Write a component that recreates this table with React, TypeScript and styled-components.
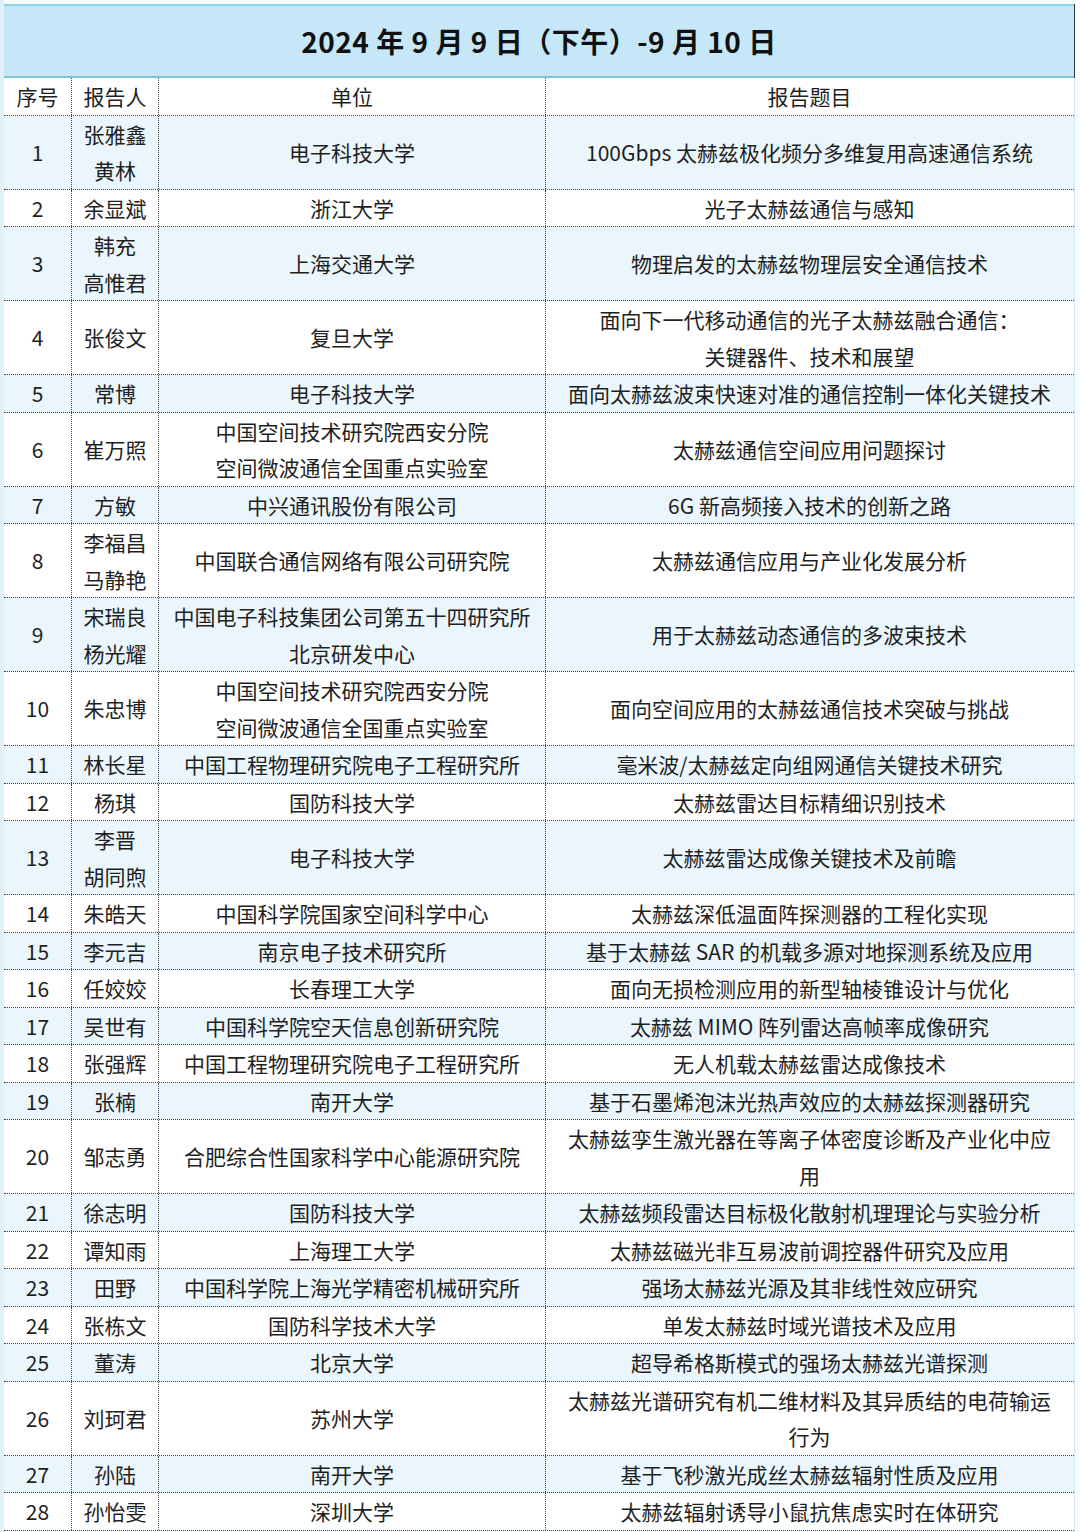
import React from 'react';
import styled, { createGlobalStyle } from 'styled-components';

interface Entry {
  no: number;
  people: string[];
  unit: string[];
  topic: string[];
}

const ROWS: Entry[] = [
  { no: 1, people: ['张雅鑫', '黄林'], unit: ['电子科技大学'], topic: ['100Gbps 太赫兹极化频分多维复用高速通信系统'] },
  { no: 2, people: ['余显斌'], unit: ['浙江大学'], topic: ['光子太赫兹通信与感知'] },
  { no: 3, people: ['韩充', '高惟君'], unit: ['上海交通大学'], topic: ['物理启发的太赫兹物理层安全通信技术'] },
  { no: 4, people: ['张俊文'], unit: ['复旦大学'], topic: ['面向下一代移动通信的光子太赫兹融合通信：', '关键器件、技术和展望'] },
  { no: 5, people: ['常博'], unit: ['电子科技大学'], topic: ['面向太赫兹波束快速对准的通信控制一体化关键技术'] },
  { no: 6, people: ['崔万照'], unit: ['中国空间技术研究院西安分院', '空间微波通信全国重点实验室'], topic: ['太赫兹通信空间应用问题探讨'] },
  { no: 7, people: ['方敏'], unit: ['中兴通讯股份有限公司'], topic: ['6G 新高频接入技术的创新之路'] },
  { no: 8, people: ['李福昌', '马静艳'], unit: ['中国联合通信网络有限公司研究院'], topic: ['太赫兹通信应用与产业化发展分析'] },
  { no: 9, people: ['宋瑞良', '杨光耀'], unit: ['中国电子科技集团公司第五十四研究所', '北京研发中心'], topic: ['用于太赫兹动态通信的多波束技术'] },
  { no: 10, people: ['朱忠博'], unit: ['中国空间技术研究院西安分院', '空间微波通信全国重点实验室'], topic: ['面向空间应用的太赫兹通信技术突破与挑战'] },
  { no: 11, people: ['林长星'], unit: ['中国工程物理研究院电子工程研究所'], topic: ['毫米波/太赫兹定向组网通信关键技术研究'] },
  { no: 12, people: ['杨琪'], unit: ['国防科技大学'], topic: ['太赫兹雷达目标精细识别技术'] },
  { no: 13, people: ['李晋', '胡同煦'], unit: ['电子科技大学'], topic: ['太赫兹雷达成像关键技术及前瞻'] },
  { no: 14, people: ['朱皓天'], unit: ['中国科学院国家空间科学中心'], topic: ['太赫兹深低温面阵探测器的工程化实现'] },
  { no: 15, people: ['李元吉'], unit: ['南京电子技术研究所'], topic: ['基于太赫兹 SAR 的机载多源对地探测系统及应用'] },
  { no: 16, people: ['任姣姣'], unit: ['长春理工大学'], topic: ['面向无损检测应用的新型轴棱锥设计与优化'] },
  { no: 17, people: ['吴世有'], unit: ['中国科学院空天信息创新研究院'], topic: ['太赫兹 MIMO 阵列雷达高帧率成像研究'] },
  { no: 18, people: ['张强辉'], unit: ['中国工程物理研究院电子工程研究所'], topic: ['无人机载太赫兹雷达成像技术'] },
  { no: 19, people: ['张楠'], unit: ['南开大学'], topic: ['基于石墨烯泡沫光热声效应的太赫兹探测器研究'] },
  { no: 20, people: ['邹志勇'], unit: ['合肥综合性国家科学中心能源研究院'], topic: ['太赫兹孪生激光器在等离子体密度诊断及产业化中应', '用'] },
  { no: 21, people: ['徐志明'], unit: ['国防科技大学'], topic: ['太赫兹频段雷达目标极化散射机理理论与实验分析'] },
  { no: 22, people: ['谭知雨'], unit: ['上海理工大学'], topic: ['太赫兹磁光非互易波前调控器件研究及应用'] },
  { no: 23, people: ['田野'], unit: ['中国科学院上海光学精密机械研究所'], topic: ['强场太赫兹光源及其非线性效应研究'] },
  { no: 24, people: ['张栋文'], unit: ['国防科学技术大学'], topic: ['单发太赫兹时域光谱技术及应用'] },
  { no: 25, people: ['董涛'], unit: ['北京大学'], topic: ['超导希格斯模式的强场太赫兹光谱探测'] },
  { no: 26, people: ['刘珂君'], unit: ['苏州大学'], topic: ['太赫兹光谱研究有机二维材料及其异质结的电荷输运', '行为'] },
  { no: 27, people: ['孙陆'], unit: ['南开大学'], topic: ['基于飞秒激光成丝太赫兹辐射性质及应用'] },
  { no: 28, people: ['孙怡雯'], unit: ['深圳大学'], topic: ['太赫兹辐射诱导小鼠抗焦虑实时在体研究'] },
];

const Lines = ({ items }: { items: string[] }) => (
  <>
    {items.map((t, i) => (
      <Line key={i}>{t}</Line>
    ))}
  </>
);

const App = () => (
  <>
    <GlobalStyle />
    <Page>
      <Sheet>
        <Title>2024 年 9 月 9 日（下午）-9 月 10 日</Title>
        <Row>
          <Cell>序号</Cell>
          <Cell>报告人</Cell>
          <Cell>单位</Cell>
          <Cell $last>报告题目</Cell>
        </Row>
        {ROWS.map((r) => (
          <Row key={r.no} $shaded={r.no % 2 === 1}>
            <Cell>{r.no}</Cell>
            <Cell>
              <Lines items={r.people} />
            </Cell>
            <Cell>
              <Lines items={r.unit} />
            </Cell>
            <Cell $last>
              <Lines items={r.topic} />
            </Cell>
          </Row>
        ))}
      </Sheet>
    </Page>
  </>
);

export default App;

const GlobalStyle = createGlobalStyle`
  html, body {
    margin: 0;
    padding: 0;
    background: #ffffff;
  }
  body {
    font-family: "Noto Sans CJK SC", "Noto Sans", sans-serif;
    color: #1f1f1f;
  }
`;

const Page = styled.div`
  width: 1080px;
  height: 1532px;
  box-sizing: border-box;
  padding: 4px 0 0 4px;
  background: linear-gradient(to right, #e2f1f9 0, #e2f1f9 4px, #fafdfe 4px);
  overflow: hidden;
`;

const Sheet = styled.div`
  width: 1070px;
  border-right: 1px solid #cfe8f3;
  background: #ffffff;
`;

const Title = styled.div`
  height: 70px;
  display: flex;
  align-items: center;
  justify-content: center;
  background: #c5e7f8;
  border-top: 2px solid #8fd0e4;
  border-bottom: 2px solid #7fc4d9;
  box-shadow: 1px 0 0 #333;
  font-size: 28px;
  font-weight: 700;
  letter-spacing: 0.5px;
  color: #111;
`;

const Row = styled.div<{ $shaded?: boolean }>`
  display: grid;
  grid-template-columns: 68px 87px 387px 527px;
  background: ${(p) => (p.$shaded ? '#eaf6fc' : '#ffffff')};
  border-bottom: 1px dotted #444;
`;

const Cell = styled.div<{ $last?: boolean }>`
  display: flex;
  flex-direction: column;
  align-items: center;
  justify-content: center;
  text-align: center;
  font-size: 21px;
  line-height: 36.5px;
  border-right: ${(p) => (p.$last ? 'none' : '1px dotted #444')};
  white-space: nowrap;
`;

const Line = styled.span`
  display: block;
`;
